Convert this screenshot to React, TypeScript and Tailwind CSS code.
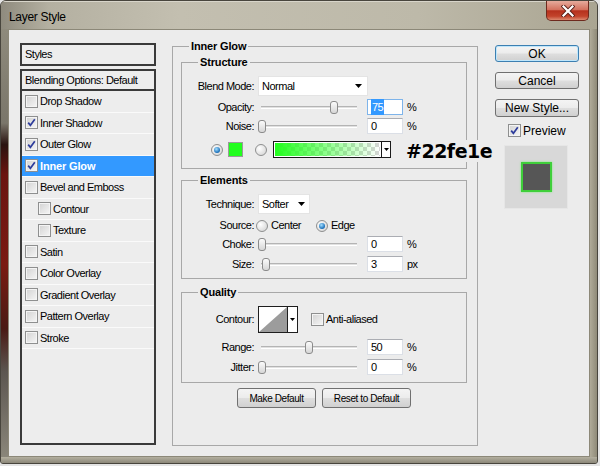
import React from "react";

type StyleItem = {
  name: string;
  on?: boolean;
  sub?: boolean;
  active?: boolean;
};

const styleItems: StyleItem[] = [
  { name: "Drop Shadow" },
  { name: "Inner Shadow", on: true },
  { name: "Outer Glow", on: true },
  { name: "Inner Glow", on: true, active: true },
  { name: "Bevel and Emboss" },
  { name: "Contour", sub: true },
  { name: "Texture", sub: true },
  { name: "Satin" },
  { name: "Color Overlay" },
  { name: "Gradient Overlay" },
  { name: "Pattern Overlay" },
  { name: "Stroke" },
];

const lbl = "text-[11px] tracking-[-0.5px]";

function Arrow({ w = 7, h = 4 }: { w?: number; h?: number }) {
  return (
    <svg width={w} height={h} viewBox={`0 0 ${w} ${h}`}>
      <polygon points={`0,0 ${w},0 ${w / 2},${h}`} fill="#000" />
    </svg>
  );
}

function CheckBox({ on }: { on?: boolean }) {
  return (
    <span className="flex h-[13px] w-[13px] shrink-0 items-center justify-center border border-[#8e8f8f] bg-[linear-gradient(135deg,#d2d2d2,#f6f6f6)] shadow-[inset_0_0_0_1px_#f4f4f4]">
      {on && (
        <svg width="9" height="9" viewBox="0 0 9 9">
          <path d="M1.2 4.6 L3.4 7.3 L7.8 1.2" fill="none" stroke="#2e3d9c" strokeWidth="1.7" />
        </svg>
      )}
    </span>
  );
}

function Radio({ on }: { on?: boolean }) {
  return (
    <span className="flex h-[12px] w-[12px] shrink-0 items-center justify-center rounded-full border border-[#8e8f8f] bg-[radial-gradient(circle_at_35%_35%,#ffffff,#cfcfcf)]">
      {on && (
        <span className="h-[6px] w-[6px] rounded-full bg-[radial-gradient(circle_at_40%_35%,#a6e0ff,#1f74bd_65%,#0b4a86)]" />
      )}
    </span>
  );
}

function Slider({ at }: { at: number }) {
  return (
    <div className="relative ml-[4px] h-[13px] w-[102px] shrink-0">
      <div className="ml-[3px] mt-[5px] h-[3px] w-[96px] border-t border-b border-t-[#b4b4b4] border-b-white bg-[#e0e0e0]" />
      <span
        className="absolute top-0 h-[13px] w-[8px] rounded-[3px] border border-[#8b8b8b] bg-[linear-gradient(180deg,#fbfbfb,#d6d6d6)]"
        style={{ left: at }}
      />
    </div>
  );
}

function NumInput({ v, sel }: { v: string; sel?: boolean }) {
  return (
    <div
      className={`ml-[7px] flex h-[16px] w-[36px] shrink-0 items-center bg-white pl-[3px] ${
        sel ? "border border-[#7eb4ea]" : "border border-[#dbdfe6] border-t-[#abadb3]"
      }`}
    >
      {sel ? <span className="bg-[#3399ff] px-[1px] text-white">{v}</span> : v}
    </div>
  );
}

function Label({ children }: { children: React.ReactNode }) {
  return <span className="w-[72px] shrink-0 text-right">{children}</span>;
}

function SliderRow({
  label,
  at,
  v,
  unit,
  sel,
  className,
}: {
  label: string;
  at: number;
  v: string;
  unit: string;
  sel?: boolean;
  className: string;
}) {
  return (
    <div className={`flex h-[16px] items-center ${className}`}>
      <Label>{label}</Label>
      <Slider at={at} />
      <NumInput v={v} sel={sel} />
      <span className="ml-[4px]">{unit}</span>
    </div>
  );
}

function Btn({ children, className }: { children: React.ReactNode; className: string }) {
  return (
    <div
      className={`flex items-center justify-center rounded-[3px] border bg-[linear-gradient(180deg,#f4f4f4_0%,#ececec_48%,#dedede_52%,#d0d0d0_100%)] ${className}`}
    >
      {children}
    </div>
  );
}

function StylesPanel() {
  return (
    <div className="mt-[13px] flex w-[136px] shrink-0 flex-col">
      <div className="flex h-[23px] items-center border-2 border-[#3a3a3a] bg-[#ededed] pl-[3px]">Styles</div>
      <div className="mt-[3px] h-[376px] border-2 border-[#3a3a3a] bg-[#ededed]">
        <div className="flex h-[20px] items-center border-b-2 border-[#3a3a3a] pl-[3px]">
          Blending Options: Default
        </div>
        {styleItems.map((it) => (
          <div
            key={it.name}
            className={`flex h-[21.5px] items-center border-b border-[#fafafa] ${
              it.sub ? "pl-[16px]" : "pl-[3px]"
            } ${it.active ? "bg-[#3399ff] font-bold tracking-[-0.15px] text-white text-[11px]" : ""}`}
          >
            <CheckBox on={it.on} />
            <span className="ml-[2px]">{it.name}</span>
          </div>
        ))}
      </div>
    </div>
  );
}

function InnerGlow() {
  const legend = "ml-[16px] px-[2px] text-[11px] font-bold leading-[13px] tracking-[-0.15px]";
  return (
    <fieldset className="mt-[10px] ml-[16px] h-[406px] w-[306px] shrink-0 border border-[#a8a8a8]">
      <legend className={legend}>Inner Glow</legend>
      <div className="pl-[8px] pr-[10px] pt-[3px]">
        <fieldset className="w-[286px] border border-[#a8a8a8] pb-[10px]">
          <legend className={legend}>Structure</legend>
          <div className="mt-[7px] flex h-[20px] items-center">
            <Label>Blend Mode:</Label>
            <div className="ml-[4px] flex h-[20px] w-[110px] items-center justify-between border border-[#e4e4e4] bg-white pl-[3px] pr-[5px]">
              <span>Normal</span>
              <Arrow />
            </div>
          </div>
          <SliderRow className="mt-[3px]" label="Opacity:" at={72} v="75" unit="%" sel />
          <SliderRow className="mt-[3px]" label="Noise:" at={0} v="0" unit="%" />
          <div className="mt-[7px] flex h-[17px] items-center pl-[29px]">
            <Radio on />
            <span className="ml-[5px] h-[15px] w-[15px] border border-[#9a9a9a] bg-[#22fe1e]" />
            <span className="ml-[12px]">
              <Radio />
            </span>
            <div className="ml-[6px] flex h-[17px] w-[118px] border border-[#1a1a1a] bg-white">
              <div className="m-[1px] flex-1 bg-[conic-gradient(#d6d6d6_25%,#ffffff_0_50%,#d6d6d6_0_75%,#ffffff_0)] bg-[length:8px_8px]">
                <div className="h-full w-full bg-[linear-gradient(90deg,#22fe1e,rgba(34,254,30,0))]" />
              </div>
              <div className="flex w-[9px] items-center justify-center border-l border-[#1a1a1a]">
                <Arrow w={5} h={3} />
              </div>
            </div>
          </div>
        </fieldset>

        <fieldset className="mt-[5px] w-[286px] border border-[#a8a8a8] pb-[6px]">
          <legend className={legend}>Elements</legend>
          <div className="mt-[7px] flex h-[20px] items-center">
            <Label>Technique:</Label>
            <div className="ml-[4px] flex h-[20px] w-[52px] items-center justify-between border border-[#e4e4e4] bg-white pl-[3px] pr-[4px]">
              <span>Softer</span>
              <Arrow />
            </div>
          </div>
          <div className="mt-[5px] flex h-[13px] items-center">
            <Label>Source:</Label>
            <span className="ml-[2px]">
              <Radio />
            </span>
            <span className="ml-[3px]">Center</span>
            <span className="ml-[15px]">
              <Radio on />
            </span>
            <span className="ml-[3px]">Edge</span>
          </div>
          <SliderRow className="mt-[4px]" label="Choke:" at={0} v="0" unit="%" />
          <SliderRow className="mt-[4px]" label="Size:" at={4} v="3" unit="px" />
        </fieldset>

        <fieldset className="mt-[7px] w-[286px] border border-[#a8a8a8] pb-[7px]">
          <legend className={legend}>Quality</legend>
          <div className="mt-[7px] flex h-[27px] items-center">
            <Label>Contour:</Label>
            <div className="ml-[4px] flex h-[27px] w-[40px] border border-[#1e1e1e] bg-white">
              <div className="h-full w-[29px] border-r border-[#1e1e1e]">
                <svg width="28" height="25" viewBox="0 0 28 25" className="block">
                  <polygon points="0,25 28,0 28,25" fill="#9c9c9c" />
                </svg>
              </div>
              <div className="flex flex-1 items-center justify-center">
                <Arrow w={5} h={3} />
              </div>
            </div>
            <span className="ml-[13px]">
              <CheckBox />
            </span>
            <span className="ml-[2px]">Anti-aliased</span>
          </div>
          <SliderRow className="mt-[6px]" label="Range:" at={47} v="50" unit="%" />
          <SliderRow className="mt-[4px]" label="Jitter:" at={0} v="0" unit="%" />
        </fieldset>

        <div className="mt-[5px] flex justify-center gap-[6px] text-[10px] tracking-[-0.4px]">
          <Btn className="h-[20px] w-[79px] border-[#707070]">Make Default</Btn>
          <Btn className="h-[20px] w-[89px] border-[#707070]">Reset to Default</Btn>
        </div>
      </div>
    </fieldset>
  );
}

function RightColumn() {
  return (
    <div className="ml-[17px] mt-[15px] flex w-[84px] shrink-0 flex-col text-[12px] tracking-normal">
      <Btn className="h-[17px] border-[#3c7fb1] shadow-[inset_0_0_0_1px_#bfe6fb]">OK</Btn>
      <Btn className="mt-[10px] h-[17px] border-[#707070]">Cancel</Btn>
      <Btn className="mt-[10px] h-[18px] border-[#707070]">New Style...</Btn>
      <div className="mt-[7px] flex h-[13px] items-center pl-[13px]">
        <CheckBox on />
        <span className="ml-[2px]">Preview</span>
      </div>
      <div className="ml-[9px] mt-[8px] flex h-[64px] w-[64px] items-center justify-center border border-[#e6e6e6] bg-[#d8d8d8]">
        <div className="h-[30px] w-[31px] border-2 border-[#3fcf3a] bg-[#565656] shadow-[0_0_2px_#7cf07a]" />
      </div>
    </div>
  );
}

export default function App() {
  return (
    <div className="h-[466px] w-[600px] bg-[#e4e4e4] font-['Liberation_Sans',Arial,sans-serif] text-black">
      <div className="relative flex h-[464px] w-[598px] flex-col overflow-hidden rounded-t-[6px] rounded-b-[3px] border border-[#48453d] bg-[#aaa697]">
        <div className="flex h-[28px] shrink-0 items-start justify-between bg-[linear-gradient(90deg,#8f8b7e_0%,#b4b0a1_8%,#c3bfb0_30%,#bdb9a9_70%,#aaa592_100%)] shadow-[inset_0_1px_0_#d8d5ca]">
          <span className="ml-[8px] mt-[7px] text-[12px] tracking-[-0.3px]">Layer Style</span>
          <div className="mr-[8px] flex h-[20px] w-[43px] items-center justify-center rounded-b-[5px] border border-t-0 border-[#6e2a1e] bg-[linear-gradient(180deg,#e6ab9c_0%,#d4725f_45%,#b6311d_52%,#c2432b_80%,#dc8a70_100%)]">
            <svg width="14" height="12" viewBox="0 0 14 12">
              <path d="M2.5 1.5 L11.5 10.5 M11.5 1.5 L2.5 10.5" stroke="#5a2018" strokeWidth="4" strokeLinecap="square" />
              <path d="M2.5 1.5 L11.5 10.5 M11.5 1.5 L2.5 10.5" stroke="#ffffff" strokeWidth="2.2" strokeLinecap="square" />
            </svg>
          </div>
        </div>
        <div className="flex h-[428px] shrink-0">
          <div className="w-[7px] shrink-0 bg-[linear-gradient(180deg,#8e8a7c_0%,#7a766a_22%,#2a1410_27%,#6a1510_34%,#7a1a12_55%,#4a1a14_70%,#5c5650_80%,#8a867a_100%)]" />
          <div className={`flex h-[428px] w-[582px] shrink-0 items-start border border-[#8c8878] bg-[#ececec] pl-[11px] ${lbl}`}>
            <StylesPanel />
            <InnerGlow />
            <RightColumn />
          </div>
          <div className="w-[7px] shrink-0 bg-[linear-gradient(90deg,#b0ab99,#8f8a78)]" />
        </div>
        <div className="flex-1 bg-[linear-gradient(180deg,#b3af9f,#8c887a)]" />
        <span className="absolute left-[405px] top-[139px] bg-[#ececec] pr-[1px] font-['DejaVu_Sans',sans-serif] text-[19px] font-bold leading-[22px] tracking-[-0.5px]">
          #22fe1e
        </span>
      </div>
    </div>
  );
}
